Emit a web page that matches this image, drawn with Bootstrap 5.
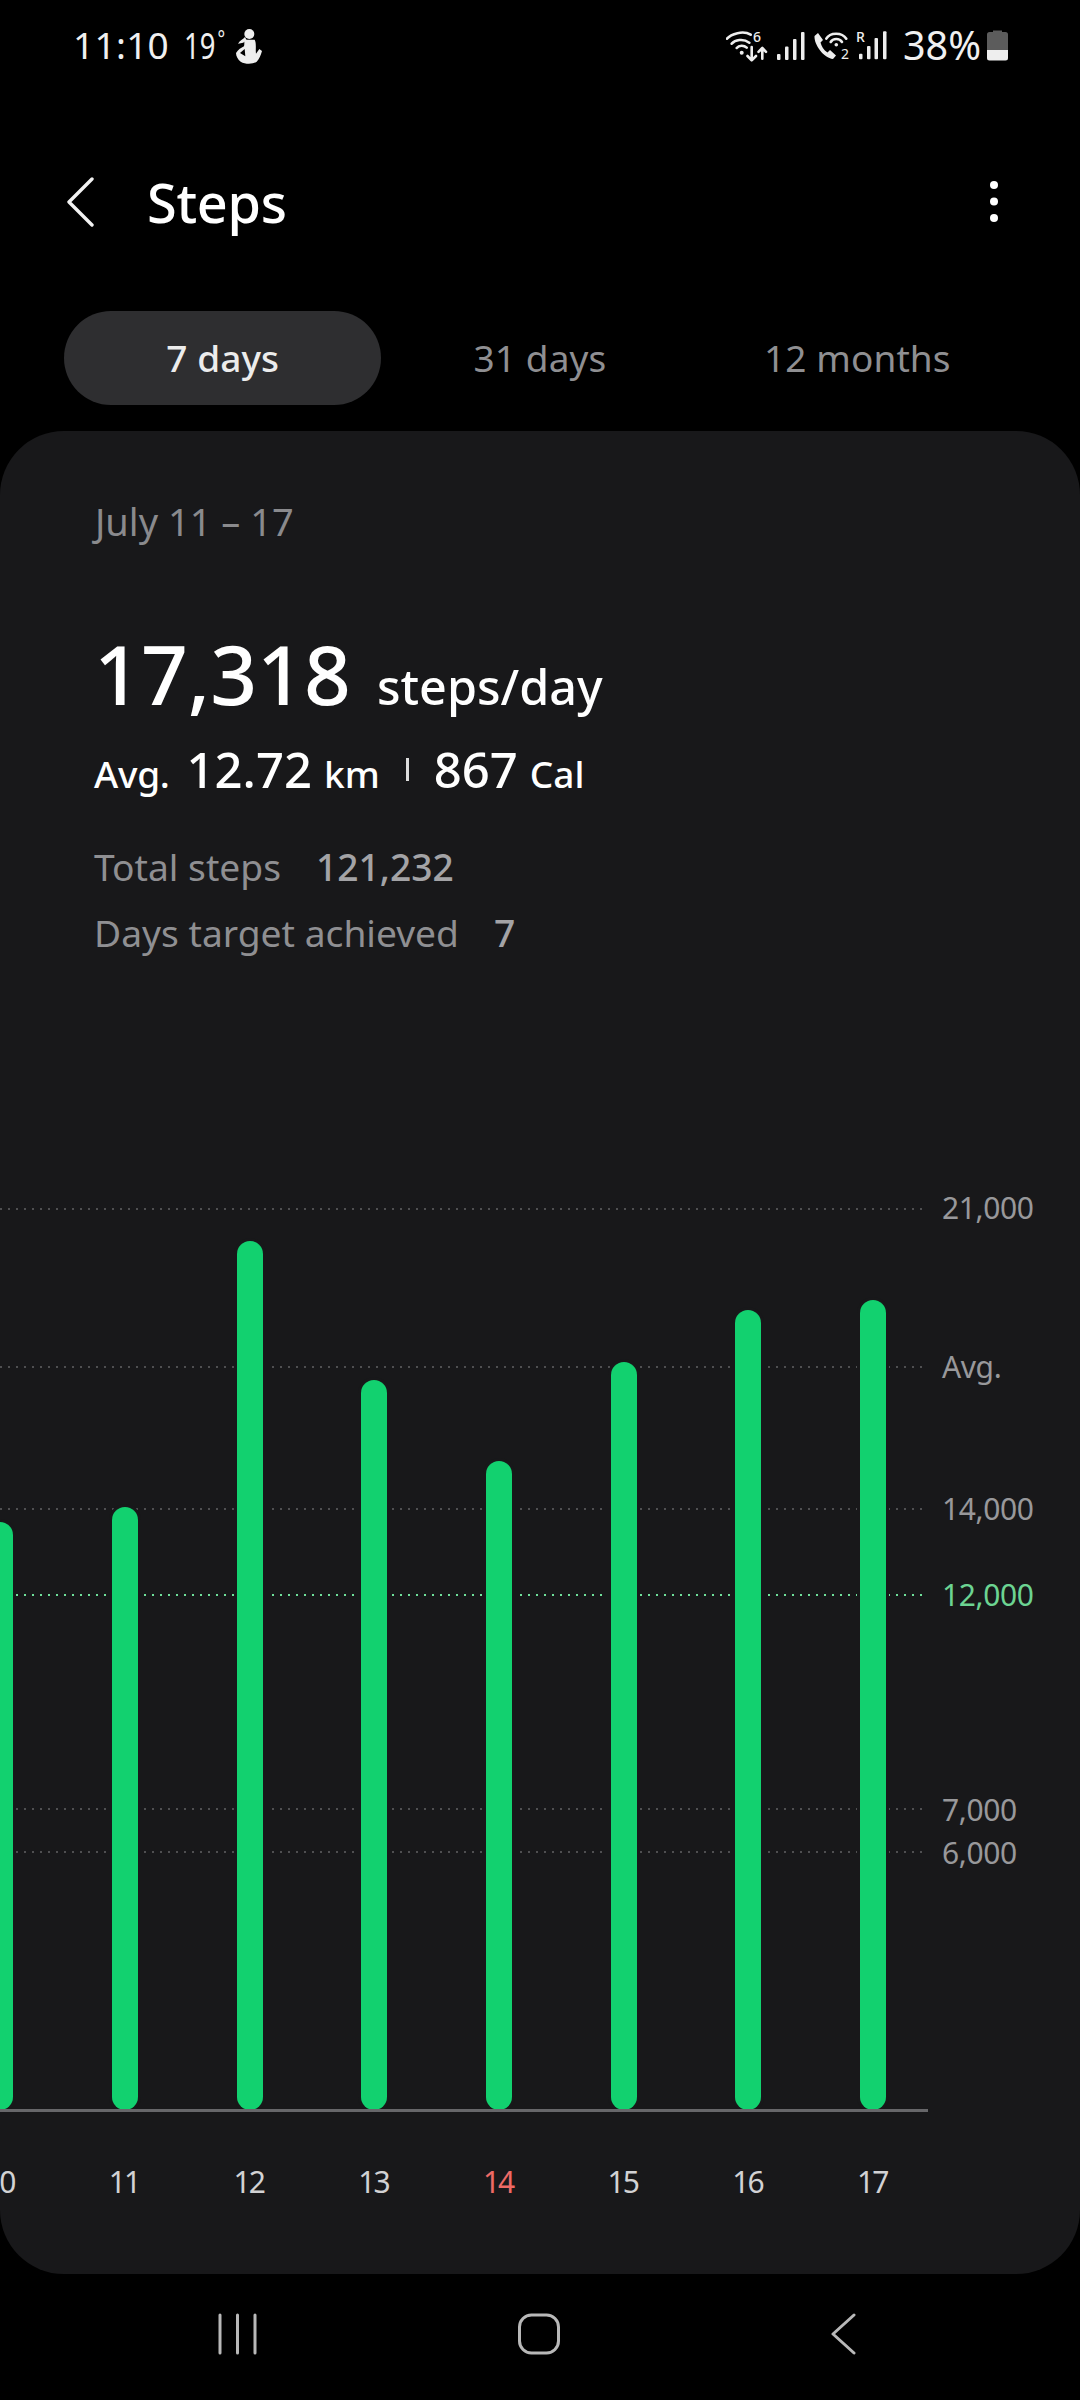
<!DOCTYPE html>
<html lang="en">
<head>
<meta charset="utf-8">
<title>Steps</title>
<link href="https://cdn.jsdelivr.net/npm/bootstrap@5.3.0/dist/css/bootstrap.min.css" rel="stylesheet">
<style>
html,body{margin:0;background:#000}
body{width:1080px;height:2400px;overflow:hidden;font-family:"Noto Sans","Open Sans",sans-serif;color:#fff}
.stat-bar{height:90px;padding:0 71px 0 73px}
.clock{font-size:37px;font-weight:400;color:#f0f0f0;line-height:1;letter-spacing:.3px;margin-top:-2px}
.temp{display:inline-block;font-size:37px;font-weight:400;color:#f0f0f0;line-height:1;margin-left:15px;margin-right:-14px;margin-top:-2px;transform:scaleX(.74);transform-origin:left center}
.temp sup{font-size:24px;top:-.5em;margin-left:3px}
.pct{font-size:39.500px;font-weight:400;color:#f0f0f0;line-height:1;margin:2px 6px 0 15px}
.top-head{height:112px;margin-top:56px;padding:0 81px 0 66px}
.top-title{font-size:54px;font-weight:500;line-height:1;margin-left:53px;letter-spacing:-.3px}
.tab-row{margin:53px 64px 0;display:grid;grid-template-columns:repeat(3,1fr);height:94px}
.tab-item{font-size:37px;color:#8f8f92;display:flex;align-items:center;justify-content:center;border-radius:47px;letter-spacing:.1px}
.tab-on{background:#2e2e30;color:#ececec;font-weight:500}
.sheet{margin-top:26px;height:1843px;background:#18181a;border-radius:64px;position:relative;overflow:hidden}
.txt-block{padding:62px 0 0 94px}
.range{font-size:38px;line-height:60px;color:#8a8a8d;margin-left:1px;margin-top:-2px}
.big-line{margin-top:72px;line-height:100px;display:flex;align-items:baseline;height:100px}
.big-num{font-size:82px;font-weight:500}
.big-unit{font-size:48.500px;font-weight:500;margin-left:26px}
.avg-line{display:flex;align-items:baseline;height:60px;line-height:60px;margin-top:16px;font-weight:500}
.avg-a{font-size:37px;letter-spacing:-.3px}
.avg-b{font-size:49px;margin-left:17px}
.avg-c{font-size:37px;margin-left:12px}
.avg-sep{width:3px;height:23px;background:#ddd;margin:0 25px 0 26px;align-self:center}
.meta{font-size:37.200px;line-height:66px;color:#8f8f92}
.meta b{font-weight:500;color:#a3a3a6;margin-left:35px}
.first-meta{margin-top:35px}
.plot{position:absolute;left:0;top:767px;width:1080px;height:912px}
.gline{position:absolute;left:0;width:923px;height:2px;background-image:radial-gradient(circle at 1px 1px,#4f4f51 1px,transparent 1.2px);background-size:8px 2px}
.gline-g{background-image:radial-gradient(circle at 1px 1px,#6fe09a 1px,transparent 1.2px)}
.glabel{position:absolute;left:942px;font-size:30px;line-height:40px;color:#98989b;letter-spacing:-.4px}
.glabel-g{color:#6cd492}
.bars{position:absolute;left:-62px;right:0;bottom:0;height:100%;display:flex;align-items:flex-end}
.bar-cell{flex:0 0 124.7px;display:flex;justify-content:center;align-items:flex-end;height:100%}
.bar-fill{width:26px;background:#12d16f;border-radius:13px;box-shadow:0 0 0 3px #18181a}
.axis{position:absolute;left:0;bottom:-2px;width:928px;height:3px;background:#67676a}
.xlabs{position:absolute;left:-63px;top:1729px;display:flex}
.xlab{flex:0 0 124.7px;text-align:center;font-size:30px;font-weight:400;line-height:44px;color:#d2d2d4;letter-spacing:-2px}
.xlab-red{color:#ee6a65}
.nav-foot{height:126px;position:relative}
.nav-slot{position:absolute;top:39px}
</style>
</head>
<body>
<div class="stat-bar d-flex align-items-center justify-content-between">
  <div class="d-flex align-items-center">
    <span class="clock">11:10</span>
    <span class="temp">19<sup>°</sup></span>
    <svg width="45" height="45" viewBox="0 0 135 135" fill="#eee" fill-rule="evenodd"><circle cx="70" cy="33" r="15"/><path d="M57 42C50 50 42 52 36 62 48 62 56 58 62 52z"/><path d="M56 50H86C92 60 88 80 90 92L100 78 108 84C104 98 100 108 92 116 80 124 58 124 44 116 36 110 30 100 30 90 36 80 46 74 54 70 56 62 54 56 56 50zM42 90 56 78 58 100z"/></svg>
  </div>
  <div class="d-flex align-items-center">
    <svg width="42" height="44" viewBox="0 -6 42 44" fill="none" stroke="#eee" stroke-width="2.600" stroke-linecap="round" stroke-linejoin="round"><path d="M1 9.700C5 5 17 1 24.700 5.700M5.700 14.700C9 11 17 9 23.300 13.700M10.700 19C13 16 18 16 20.700 18.700"/><circle cx="15.700" cy="23.700" r="2" fill="#eee" stroke="none"/><path d="M25.700 18V31.300M21.500 27 25.700 31.300 30 27M36.300 29.700V19M32.500 22.800 36.300 19 40 22.800"/><text x="27" y="13" font-size="14" font-family="Noto Sans" fill="#eee" stroke="none" font-weight="500">6</text></svg>
    <svg class="ms-2" width="30" height="30" viewBox="0 0 30 30" fill="#eee"><rect x="1" y="24" width="3.500" height="6" rx="1"/><rect x="9" y="16.500" width="3.500" height="13.500" rx="1"/><rect x="17" y="9" width="3.500" height="21" rx="1"/><rect x="25" y="2" width="3.500" height="28" rx="1"/></svg>
    <svg style="margin-left:7px" width="40" height="44" viewBox="0 -6 40 44" fill="none" stroke="#eee" stroke-width="2.600" stroke-linecap="round"><path d="M5 4 1.500 7C1 16 11 29 20 30L23 26.500 17 21 14.500 23.500C10.500 21 8.500 17 7.500 13.500L10 11z" fill="#eee" stroke="none"/><path d="M13.300 9.700C17 3 29 3 33.300 9.700M17.700 13C20 9 26.500 9 29 13"/><circle cx="23.300" cy="15.700" r="1.800" fill="#eee" stroke="none"/><text x="28" y="30" font-size="14" font-family="Noto Sans" fill="#eee" stroke="none">2</text></svg>
    <svg style="margin-left:2px" width="33" height="44" viewBox="0 -6 33 44" fill="#eee"><text x="1" y="13" font-size="14" font-family="Noto Sans" font-weight="500">R</text><rect x="4" y="24.700" width="3.500" height="5.600" rx="1"/><rect x="12" y="17" width="3.500" height="13.300" rx="1"/><rect x="19.500" y="9" width="3.500" height="21.300" rx="1"/><rect x="28" y="2.300" width="3.500" height="28" rx="1"/></svg>
    <span class="pct">38%</span>
    <svg width="22" height="32" viewBox="0 0 22 32"><path d="M6 3V1.500h9V3h3.500A2.500 2.500 0 0 1 21 5.500V21H0V5.500A2.500 2.500 0 0 1 2.500 3z" fill="#5c5c5c"/><path d="M0 21h21v8a2.500 2.500 0 0 1-2.500 2.500h-16A2.500 2.500 0 0 1 0 29z" fill="#eee"/></svg>
  </div>
</div>

<div class="top-head d-flex align-items-center justify-content-between">
  <div class="d-flex align-items-center">
    <svg width="28" height="50" viewBox="0 0 28 50" fill="none" stroke="#f2f2f2" stroke-width="3.400" stroke-linecap="round" stroke-linejoin="round"><path d="M26 2 3 25l23 23"/></svg>
    <span class="top-title">Steps</span>
  </div>
  <svg width="10" height="44" viewBox="0 0 10 44" fill="#fff"><circle cx="5" cy="5" r="4"/><circle cx="5" cy="21.500" r="4"/><circle cx="5" cy="38" r="4"/></svg>
</div>

<div class="tab-row">
  <div class="tab-item tab-on">7 days</div>
  <div class="tab-item">31 days</div>
  <div class="tab-item">12 months</div>
</div>

<div class="sheet">
  <div class="txt-block">
    <div class="range">July 11 – 17</div>
    <div class="big-line"><span class="big-num">17,318</span><span class="big-unit">steps/day</span></div>
    <div class="avg-line"><span class="avg-a">Avg.</span><span class="avg-b">12.72</span><span class="avg-c">km</span><span class="avg-sep"></span><span class="avg-b ms-0">867</span><span class="avg-c">Cal</span></div>
    <div class="meta first-meta">Total steps<b>121,232</b></div>
    <div class="meta">Days target achieved<b>7</b></div>
  </div>
  <div class="plot">
    <div class="gline" style="top:10px"></div>
    <div class="gline" style="top:168px"></div>
    <div class="gline" style="top:310px"></div>
    <div class="gline gline-g" style="top:396px"></div>
    <div class="gline" style="top:610px"></div>
    <div class="gline" style="top:653px"></div>
    <div class="bars">
      <div class="bar-cell"><div class="bar-fill" style="height:588px"></div></div>
      <div class="bar-cell"><div class="bar-fill" style="height:603px"></div></div>
      <div class="bar-cell"><div class="bar-fill" style="height:869px"></div></div>
      <div class="bar-cell"><div class="bar-fill" style="height:730px"></div></div>
      <div class="bar-cell"><div class="bar-fill" style="height:649px"></div></div>
      <div class="bar-cell"><div class="bar-fill" style="height:748px"></div></div>
      <div class="bar-cell"><div class="bar-fill" style="height:800px"></div></div>
      <div class="bar-cell"><div class="bar-fill" style="height:810px"></div></div>
    </div>
    <div class="axis"></div>
    <div class="glabel" style="top:-10px">21,000</div>
    <div class="glabel" style="top:149px">Avg.</div>
    <div class="glabel" style="top:291px">14,000</div>
    <div class="glabel glabel-g" style="top:377px">12,000</div>
    <div class="glabel" style="top:592px">7,000</div>
    <div class="glabel" style="top:635px">6,000</div>
  </div>
  <div class="xlabs">
    <span class="xlab">10</span><span class="xlab">11</span><span class="xlab">12</span><span class="xlab">13</span><span class="xlab xlab-red">14</span><span class="xlab">15</span><span class="xlab">16</span><span class="xlab">17</span>
  </div>
</div>

<div class="nav-foot">
  <svg class="nav-slot" style="left:216px" width="44" height="42" viewBox="0 0 44 42" stroke="#b8b8b8" stroke-width="3" stroke-linecap="round"><path d="M4 2v38M21.500 2v38M39 2v38"/></svg>
  <svg class="nav-slot" style="left:517px" width="44" height="42" viewBox="0 0 44 42" fill="none" stroke="#b8b8b8" stroke-width="3"><rect x="2.500" y="2" width="39" height="38" rx="12"/></svg>
  <svg class="nav-slot" style="left:829px" width="28" height="42" viewBox="0 0 28 42" fill="none" stroke="#b8b8b8" stroke-width="3" stroke-linecap="round" stroke-linejoin="round"><path d="M25 2 4 21l21 19"/></svg>
</div>
<script src="https://cdn.jsdelivr.net/npm/bootstrap@5.3.0/dist/js/bootstrap.bundle.min.js"></script>
</body>
</html>
